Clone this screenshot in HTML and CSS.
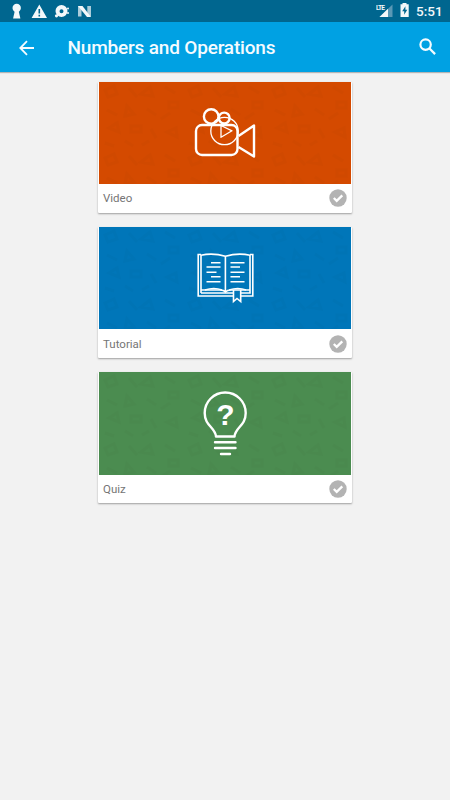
FILE: index.html
```html
<!DOCTYPE html>
<html lang="en">
  <head>
    <meta charset="UTF-8" />
    <meta name="viewport" content="width=device-width, initial-scale=1.0" />
    <title>Numbers and Operations</title>
    <link rel="stylesheet" href="styles.css">
  </head>
  <body>
    <!-- status bar -->
    <div class="status">
      <svg class="notices" width="110" height="22" viewBox="0 0 110 22">
        <g fill="#f4f8fa">
          <circle cx="16.7" cy="8" r="4.2" />
          <path d="M15 10h3.4l2 8.5h-7.3z" />
          <path fill-rule="evenodd" d="M39.3 4.5L47 18H31.6zM38.5 9v4.5h1.6V9zM38.5 14.8v1.6h1.6v-1.6z" />
          <path fill-rule="evenodd" d="M61.5 5a6 6 0 1 1 0 12a6 6 0 1 1 0-12zM61.5 9.2a2 2 0 1 0 0 4a2 2 0 1 0 0-4z" />
          <circle cx="56.5" cy="15.8" r="1.6" />
          <circle cx="68" cy="8.5" r="1" />
          <circle cx="68" cy="13" r="1" />
          <path d="M78 6h3.5v10.5h-3.5zM87.3 6h3.7v10.5h-3.7z" opacity=".7" />
          <path d="M78 6h4.5l8.5 11h-4z" />
        </g>
      </svg>
      <svg class="system" width="50" height="22" viewBox="0 0 50 22">
        <text class="lte" x="0" y="10" textLength="9">LTE</text>
        <path d="M3.5 17L16.5 4.5V17z" fill="#8bb4c9" opacity=".65" />
        <path d="M3.5 17L12 8.8V17z" fill="#f4f8fa" />
        <path d="M24.5 4.2h2V3h4v1.2h2.2V17h-8.2z" fill="#f4f8fa" />
        <path d="M29.4 6.2l-3.2 5h2v3.6l3.1-5h-1.9z" fill="#00668f" />
      </svg>
      <span class="clock">5:51</span>
    </div>

    <!-- app bar -->
    <header class="bar">
      <svg class="back" width="16" height="16" viewBox="0 0 16 16">
        <path d="M15 8H1.5M8 1.2L1.3 8L8 14.8" />
      </svg>
      <h1 class="title">Numbers and Operations</h1>
      <svg class="search" width="18" height="18" viewBox="0 0 18 18">
        <circle cx="6.6" cy="6.6" r="5.2" />
        <path d="M10.5 10.5l5.6 5.6" />
      </svg>
    </header>

    <main class="list">
      <div class="card">
        <div class="cover video">
          <svg width="80" height="75" viewBox="0 0 80 75">
            <g class="line">
              <rect x="11" y="30" width="41.5" height="30" rx="6" />
              <path d="M53.5 41L69 30.5V61.5L53.5 52" />
              <circle cx="26.2" cy="21.5" r="7.3" />
              <circle cx="39.2" cy="23" r="5.4" />
              <circle class="thin" cx="39.5" cy="36" r="13.7" />
              <path class="thin" d="M36 30.5L47 35.8L36 42.3z" />
            </g>
          </svg>
        </div>
        <div class="info">
          <span class="name">Video</span>
          <svg class="done" width="18" height="18" viewBox="0 0 18 18">
            <circle cx="9" cy="9" r="8.7" />
            <path d="M4.8 9l2.9 2.9l5.6-5.5" />
          </svg>
        </div>
      </div>

      <div class="card">
        <div class="cover tutorial">
          <svg width="80" height="75" viewBox="0 0 80 75">
            <g class="book">
              <path d="M16 14.5H13.2V56H48M56 56H67.8V14.5H65" />
              <path d="M16 53V15.2Q28 12.5 40.4 16.3Q53 12.5 65 15.2V53H56M48 53H16" />
              <path d="M40.4 16.3V51.5M16 50H35Q39 50 40.4 52Q42 50 46 50H48M56 50H65" />
              <path d="M20 50Q29 47 37 50M44 50Q53 47 61 50" />
              <path d="M26 22.8h9.5M21.5 27h14M21.5 32.3h10M26 36.8h9.5M21.5 41.7h14" />
              <path d="M45.5 22.8h14M45.5 27h9.5M45.5 32.3h14M45.5 36.8h9.5M45.5 41.7h14" />
              <path d="M48.5 50V61.5L52 58.5L55.7 61.5V50z" />
            </g>
          </svg>
        </div>
        <div class="info">
          <span class="name">Tutorial</span>
          <svg class="done" width="18" height="18" viewBox="0 0 18 18">
            <circle cx="9" cy="9" r="8.7" />
            <path d="M4.8 9l2.9 2.9l5.6-5.5" />
          </svg>
        </div>
      </div>

      <div class="card">
        <div class="cover quiz">
          <svg width="80" height="85" viewBox="0 0 80 85">
            <g class="line">
              <path d="M31 56.5C30 47 19.7 46 19.7 33A20.5 20.5 0 0 1 60.7 33C60.7 46 50.5 47 49.5 56.5z" />
              <path d="M30 62.3h20.5M30 68h20.5M36 74h9" stroke-linecap="round" />
            </g>
            <text class="mark" x="40.3" y="44.5">?</text>
          </svg>
        </div>
        <div class="info">
          <span class="name">Quiz</span>
          <svg class="done" width="18" height="18" viewBox="0 0 18 18">
            <circle cx="9" cy="9" r="8.7" />
            <path d="M4.8 9l2.9 2.9l5.6-5.5" />
          </svg>
        </div>
      </div>
    </main>
  </body>
</html>
```

FILE: styles.css
```css
* {
  margin: 0;
  padding: 0;
  box-sizing: border-box;
}

body {
  height: 800px;
  background-color: #f2f2f2;
  font-family: Roboto, "Liberation Sans", sans-serif;
}

svg {
  display: block;
  flex: none;
}

.status {
  display: flex;
  align-items: center;
  height: 22px;
  padding-right: 8px;
  background-color: #00668f;
}

.system {
  margin-left: auto;
}

.lte {
  font-size: 6.5px;
  font-weight: bold;
  fill: #f4f8fa;
}

.clock {
  width: 26px;
  margin-left: -10px;
  color: #f4f8fa;
  font-size: 13.5px;
  font-weight: 500;
  line-height: 23px;
  white-space: nowrap;
}

.bar {
  display: flex;
  align-items: center;
  height: 50px;
  padding: 1px 13px 0 19px;
  background-color: #00a1e3;
  box-shadow: 0 1px 1px rgba(0, 0, 0, 0.25);
}

.back,
.search {
  fill: none;
  stroke: #f4fbff;
  stroke-width: 1.8;
}

.search {
  margin: 0 0 1px auto;
  stroke-width: 2.2;
}

.title {
  margin: 1px 0 0 32.5px;
  color: #f4fbff;
  font-size: 19px;
  font-weight: 500;
  letter-spacing: -0.18px;
  line-height: 24px;
}

.list {
  display: grid;
  gap: 14.3px;
  width: 254px;
  margin: 9.7px auto 0;
}

.card {
  height: 131px;
  background-color: #fff;
  border-radius: 1px;
  box-shadow: 0 1px 2px rgba(0, 0, 0, 0.35);
}

.cover {
  display: flex;
  justify-content: center;
  height: 102.5px;
  margin: 0 1px;
  /* faint scattered shapes over the cover colour */
  background-image: url("data:image/svg+xml,%3Csvg xmlns='http://www.w3.org/2000/svg' width='84' height='68'%3E%3Cg fill='none' stroke='%23000' stroke-opacity='.02' stroke-width='3'%3E%3Cpath d='M6 8l9-4 3 8-9 3zM30 6l8 9M42 12l9-7 3 9zM66 5l10 6M70 20h9v6h-9zM8 28l10 5M28 24l7 8-9 2zM48 27l9 6M62 37l9-6M10 46l8-5 2 9zM32 44h10v6h-10zM52 47l5 9M68 50l9-4 1 9zM6 61l9 3M26 59l8 5M43 63l7-4'/%3E%3C/g%3E%3C/svg%3E");
}

.video {
  padding-top: 13px;
  background-color: #d44a00;
}

.tutorial {
  padding-top: 13px;
  background-color: #0076b9;
}

.quiz {
  padding-top: 8px;
  background-color: #4b8c50;
}

.line {
  fill: none;
  stroke: #fff;
  stroke-width: 2.4;
  stroke-linejoin: round;
}

.thin {
  stroke-width: 1.3;
}

.book {
  fill: none;
  stroke: #fff;
  stroke-width: 1.6;
}

.mark {
  fill: #fff;
  font-family: "Liberation Sans", sans-serif;
  font-size: 30px;
  font-weight: bold;
  text-anchor: middle;
}

.info {
  display: flex;
  align-items: center;
  justify-content: space-between;
  height: 28.5px;
  padding: 0 5px;
}

.name {
  color: #757575;
  font-size: 11.5px;
  line-height: 16px;
}

.done circle {
  fill: #b3b3b3;
}

.done path {
  fill: none;
  stroke: #fff;
  stroke-width: 2.3;
}
```
